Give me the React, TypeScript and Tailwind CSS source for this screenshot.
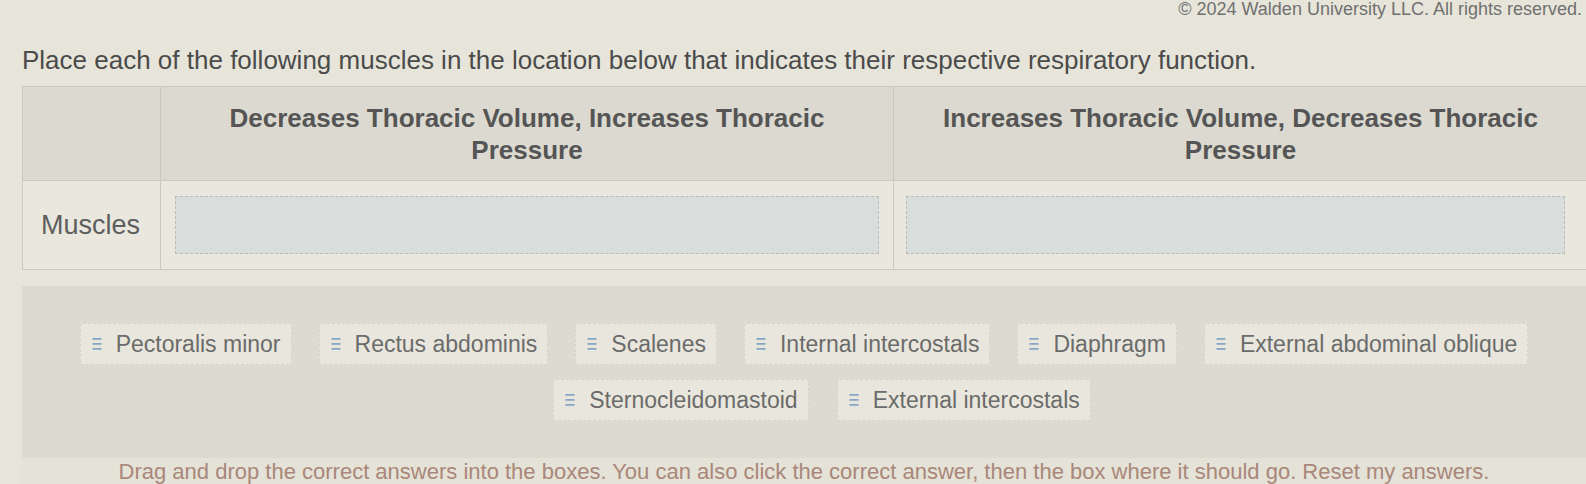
import type { ReactNode } from "react";

const rowOne = [
  "Pectoralis minor",
  "Rectus abdominis",
  "Scalenes",
  "Internal intercostals",
  "Diaphragm",
  "External abdominal oblique",
];

const rowTwo = ["Sternocleidomastoid", "External intercostals"];

function Grip() {
  return (
    <svg width="10" height="14" viewBox="0 0 10 14" className="shrink-0">
      <rect x="0.5" y="1" width="9" height="1.8" fill="#86a6c4" />
      <rect x="0.5" y="6" width="9" height="1.8" fill="#86a6c4" />
      <rect x="0.5" y="11" width="9" height="1.8" fill="#86a6c4" />
    </svg>
  );
}

function Chip({ label }: { label: string }) {
  return (
    <div className="flex items-center gap-[14px] h-[42px] pl-[11px] pr-[10px] bg-[#e9e7dd] border border-dashed border-[#d6d4ca] rounded-[3px] text-[23px] text-[#6b6b6b] whitespace-nowrap">
      <Grip />
      <span>{label}</span>
    </div>
  );
}

function DropZone() {
  return <div className="h-full bg-[#d9dddb] border border-dashed border-[#b9bdbb]" />;
}

function HeaderCell({ children, last }: { children?: ReactNode; last?: boolean }) {
  return (
    <div
      className={
        last
          ? "flex items-center justify-center px-6 h-[93px] bg-[#dcdad0] text-center font-bold text-[26px] leading-[32px] text-[#555555]"
          : "flex items-center justify-center px-6 h-[93px] bg-[#dcdad0] border-r border-[#cbc9bf] text-center font-bold text-[26px] leading-[32px] text-[#555555]"
      }
    >
      {children}
    </div>
  );
}

export default function App() {
  return (
    <div
      className="w-full h-[484px] overflow-hidden bg-[#e7e5da]"
      style={{ fontFamily: '"Liberation Sans", Arial, sans-serif' }}
    >
      {/* copyright line at the top edge */}
      <div className="flex justify-end h-[16px] pr-[4px] text-[18px] leading-[18px] text-[#707070] whitespace-nowrap">
        © 2024 Walden University LLC. All rights reserved.
      </div>

      <p className="pl-[22px] mt-[29px] text-[26px] leading-[30px] text-[#4b4b4b] whitespace-nowrap">
        Place each of the following muscles in the location below that indicates their respective respiratory function.
      </p>

      {/* Table */}
      <div className="ml-[22px] -mr-[2px] mt-[11px] grid grid-cols-[138px_733px_1fr] border border-[#cbc9bf]">
        <HeaderCell />
        <HeaderCell>
          Decreases Thoracic Volume, Increases Thoracic
          <br />
          Pressure
        </HeaderCell>
        <HeaderCell last>
          Increases Thoracic Volume, Decreases Thoracic
          <br />
          Pressure
        </HeaderCell>

        <div className="flex items-center pl-[18px] h-[89px] bg-[#e9e7de] border-t border-r border-[#cbc9bf] text-[27px] text-[#5e5e5e]">
          Muscles
        </div>
        <div className="px-[14px] py-[15px] bg-[#e9e7de] border-t border-r border-[#cbc9bf]">
          <DropZone />
        </div>
        <div className="pl-[12px] pr-[22px] py-[15px] bg-[#e9e7de] border-t border-[#cbc9bf]">
          <DropZone />
        </div>
      </div>

      {/* Answer bank */}
      <div className="ml-[22px] mt-[16px] h-[172px] bg-[#dddbd1] flex flex-col items-center justify-center gap-[14px]">
        <div className="flex justify-center gap-[27px]">
          {rowOne.map((m) => (
            <Chip key={m} label={m} />
          ))}
        </div>
        <div className="flex justify-center gap-[28px] pl-[36px]">
          {rowTwo.map((m) => (
            <Chip key={m} label={m} />
          ))}
        </div>
      </div>

      {/* Instructions */}
      <div className="ml-[22px] h-[40px] bg-[#e5e2d7] flex justify-center pt-[1px] text-[22px] leading-[25px] text-[#a9877a] whitespace-nowrap">
        <span>
          Drag and drop the correct answers into the boxes. You can also click the correct answer, then the box where it
          should go. <span>Reset my answers.</span>
        </span>
      </div>
    </div>
  );
}
